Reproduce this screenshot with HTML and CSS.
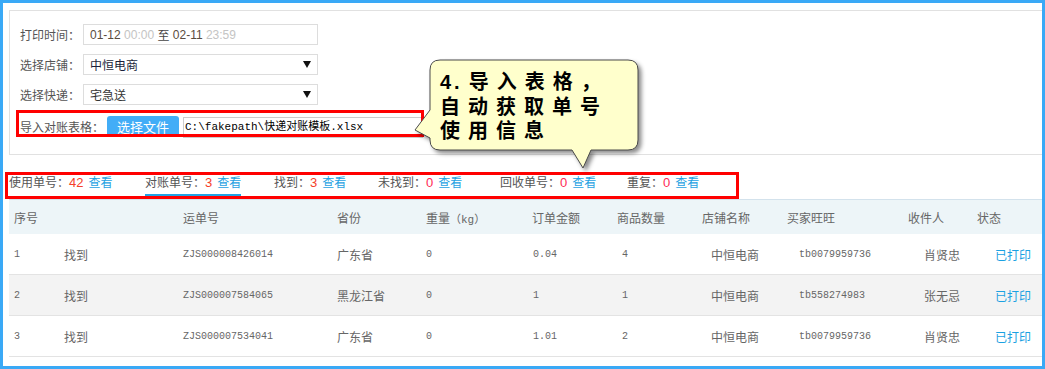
FILE: index.html
```html
<!DOCTYPE html>
<html>
<head>
<meta charset="utf-8" />
<title>快递对账</title>
<link rel="stylesheet" href="styles.css">
</head>
<body>
<div class="frame">
	<div class="panel">
		<div class="form-row">
			<span class="label">打印时间：</span>
			<div class="field"><span class="date">01-12</span>&nbsp;<span class="time">00:00</span>&nbsp;<span class="to">至</span>&nbsp;<span class="date">02-11</span>&nbsp;<span class="time">23:59</span></div>
		</div>
		<div class="form-row">
			<span class="label">选择店铺：</span>
			<div class="field select"><span class="shop">中恒电商</span><i class="arrow"></i></div>
		</div>
		<div class="form-row">
			<span class="label">选择快递：</span>
			<div class="field select"><span class="express">宅急送</span><i class="arrow"></i></div>
		</div>
		<div class="form-row import">
			<span class="label label-wide">导入对账表格：</span>
			<span class="file-btn">选择文件</span>
			<div class="file-path">C:\fakepath\快递对账模板.xlsx</div>
		</div>
	</div>

	<div class="summary">
		<div class="stat s1">使用单号：<span class="num">42</span><span class="view">查看</span></div>
		<div class="stat s2"><span class="active">对账单号：<span class="num">3</span><span class="view">查看</span></span></div>
		<div class="stat s3">找到：<span class="num">3</span><span class="view">查看</span></div>
		<div class="stat s4">未找到：<span class="num pink">0</span><span class="view">查看</span></div>
		<div class="stat s5">回收单号：<span class="num pink">0</span><span class="view">查看</span></div>
		<div class="stat">重复：<span class="num pink">0</span><span class="view">查看</span></div>
	</div>

	<div class="thead">
		<span>序号</span>
		<span></span>
		<span>运单号</span>
		<span>省份</span>
		<span>重量<span class="mono">（kg）</span></span>
		<span>订单金额</span>
		<span>商品数量</span>
		<span>店铺名称</span>
		<span>买家旺旺</span>
		<span>收件人</span>
		<span>状态</span>
	</div>
	<div class="trow">
		<span class="mono">1</span>
		<span>找到</span>
		<span class="mono">ZJS000008426014</span>
		<span>广东省</span>
		<span class="mono">0</span>
		<span class="mono">0.04</span>
		<span class="mono">4</span>
		<span>中恒电商</span>
		<span class="mono">tb0079959736</span>
		<span>肖贤忠</span>
		<span class="printed">已打印</span>
	</div>
	<div class="trow even">
		<span class="mono">2</span>
		<span>找到</span>
		<span class="mono">ZJS000007584065</span>
		<span>黑龙江省</span>
		<span class="mono">0</span>
		<span class="mono">1</span>
		<span class="mono">1</span>
		<span>中恒电商</span>
		<span class="mono">tb558274983</span>
		<span>张无忌</span>
		<span class="printed">已打印</span>
	</div>
	<div class="trow">
		<span class="mono">3</span>
		<span>找到</span>
		<span class="mono">ZJS000007534041</span>
		<span>广东省</span>
		<span class="mono">0</span>
		<span class="mono">1.01</span>
		<span class="mono">2</span>
		<span>中恒电商</span>
		<span class="mono">tb0079959736</span>
		<span>肖贤忠</span>
		<span class="printed">已打印</span>
	</div>
</div>

<!-- 标注：红框 + 提示气泡 -->
<div class="mark mark-import"></div>
<div class="mark mark-summary"></div>
<svg class="bubble" width="245" height="125" viewBox="0 0 245 125">
	<path d="M35,5 H223 Q233,5 233,15 V85 Q233,95 223,95 H186 L178,113 L167,95 H35 Q25,95 25,85 V83 L10,75 L25,55 V15 Q25,5 35,5 Z" fill="#ffffcc" stroke="#4a4a4a" stroke-width="1"/>
</svg>
<div class="bubble-text">
	<div><span class="step">4.</span>导入表格，</div>
	<div>自动获取单号</div>
	<div>使用信息</div>
</div>
</body>
</html>
```

FILE: styles.css
```css
body{ margin: 0; font-family: "Noto Sans CJK SC", sans-serif; font-size: 12px; color: #555; }
.frame{ width: 1045px; height: 369px; box-sizing: border-box; border: 3px solid #3aa9f6; padding: 7px 0 0 6px; background: #fff; overflow: hidden; }

.panel{ height: 145px; box-sizing: border-box; border: 1px solid #e1e1e1; border-right: 0; padding: 13px 0 0 10px; }
.form-row{ display: flex; align-items: center; height: 21px; margin-bottom: 9px; }
.form-row.import{ height: 22px; margin-top: 11px; margin-bottom: 0; align-items: flex-start; }
.label{ width: 63px; line-height: 21px; white-space: nowrap; }
.label-wide{ width: 87px; line-height: 22px; }
.field{ width: 235px; height: 21px; box-sizing: border-box; border: 1px solid #ddd; display: flex; align-items: center; padding-left: 6px; font-family: "Liberation Sans", "Noto Sans CJK SC", sans-serif; font-size: 12px; color: #5a4c40; }
.field .time{ color: #c4c4c4; }
.field .to{ color: #444; font-family: "Noto Sans CJK SC", sans-serif; }
.select .shop{ color: #1a1f3a; font-family: "Noto Sans CJK SC", sans-serif; }
.select .express{ color: #333; font-family: "Noto Sans CJK SC", sans-serif; }
.arrow{ margin-left: auto; margin-right: 6px; width: 0; height: 0; border-left: 4px solid transparent; border-right: 4px solid transparent; border-top: 7px solid #111; }
.file-btn{ width: 72px; height: 21px; line-height: 21px; text-align: center; background: #42adf7; color: #fff; font-size: 13px; border-radius: 3px 3px 0 0; margin-right: 4px; }
.file-path{ width: 240px; height: 21px; margin-top: 1px; box-sizing: border-box; border: 1px solid #ccc; padding-left: 1px; line-height: 19px; font-family: "Liberation Mono", "Noto Sans CJK SC", monospace; font-size: 11px; color: #000; white-space: nowrap; overflow: hidden; }

.summary{ height: 44px; box-sizing: border-box; padding-top: 17px; display: flex; align-items: flex-start; white-space: nowrap; }
.stat{ line-height: 20px; }
.s1{ width: 136px; }
.s2{ width: 129px; }
.s3{ width: 104px; }
.s4{ width: 122px; }
.s5{ width: 127px; }
.stat .active{ display: inline-block; padding-bottom: 1px; border-bottom: 2px solid #1ea3e6; }
.num{ font-family: "Liberation Sans", sans-serif; font-size: 13px; color: #f5402a; margin-right: 5px; }
.num.pink{ color: #ff2a55; }
.view{ color: #1fa2e2; }

.thead, .trow{ display: grid; padding-left: 5px; align-items: center; color: #666; white-space: nowrap; }
.thead{ grid-template-columns: 50px 119px 154px 89px 106px 85px 85px 85px 121px 69px 1fr; height: 34px; border-top: 1px solid #d3e2ec; background: #edf5f8; }
.trow{ grid-template-columns: 50px 119px 154px 89px 107px 89px 89px 88px 125px 71px 1fr; height: 40px; border-bottom: 1px solid #e3e3e3; }
.trow.even{ background: #f3f3f3; }
.mono{ font-family: "Liberation Mono", "Noto Sans CJK SC", monospace; font-size: 10px; }
.thead .mono{ font-size: 11px; }
.printed{ color: #1ba1e2; }

.mark{ position: absolute; box-sizing: border-box; border: 3px solid #f00; }
.mark-import{ left: 16px; top: 110px; width: 408px; height: 27px; }
.mark-summary{ left: 5px; top: 172px; width: 734px; height: 27px; }
.bubble{ position: absolute; left: 405px; top: 55px; filter: drop-shadow(3px 3px 2px rgba(0,0,0,.45)); }
.bubble-text{ position: absolute; left: 440px; top: 70px; font-family: "Liberation Sans", "Noto Sans CJK SC", sans-serif; font-size: 20px; font-weight: bold; line-height: 24.5px; letter-spacing: 8px; color: #000; white-space: nowrap; }
.bubble-text .step{ letter-spacing: 3px; margin-right: 6px; }
```
